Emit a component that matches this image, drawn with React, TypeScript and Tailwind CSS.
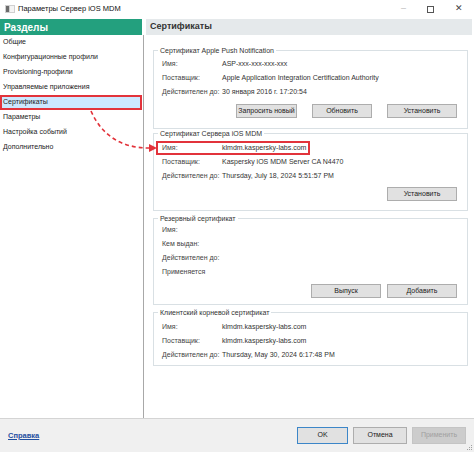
import type { ReactNode } from 'react';

const sections = [
  'Общие',
  'Конфигурационные профили',
  'Provisioning-профили',
  'Управляемые приложения',
  'Сертификаты',
  'Параметры',
  'Настройка событий',
  'Дополнительно'
];

function Btn({ children, className = '' }: { children: ReactNode; className?: string }) {
  return (
    <div
      className={`flex h-[14px] items-center justify-center border border-[#adadad] bg-[#e1e1e1] text-[7px] text-[#222] ${className}`}
    >
      {children}
    </div>
  );
}

function Row({ label, value, boxed = false }: { label: string; value?: string; boxed?: boolean }) {
  return (
    <div
      className={
        boxed
          ? 'ml-[2px] grid h-[14px] w-[154px] grid-cols-[60px_1fr] items-center border-2 border-[#e2333b] pl-[4px]'
          : 'grid h-[14px] grid-cols-[60px_1fr] items-center pl-[8px]'
      }
    >
      <span className="text-[#444]">{label}</span>
      <span className="text-[#333]">{value}</span>
    </div>
  );
}

function Group({ title, children, className = '' }: { title: string; children: ReactNode; className?: string }) {
  return (
    <fieldset className={`border border-[#d9e0e4] px-0 ${className}`}>
      <legend className="ml-[4px] px-[2px] text-[7px] leading-[9px] text-[#333]">{title}</legend>
      {children}
    </fieldset>
  );
}

export default function App() {
  return (
    <div className="relative flex h-[452px] w-[474px] flex-col overflow-hidden bg-white font-['Liberation_Sans',Arial,sans-serif] text-[7px] text-[#333]">
      {/* title bar */}
      <div className="flex h-[18px] items-center">
        <svg width="10" height="8" viewBox="0 0 10 8" className="ml-[5px]">
          <rect x="0" y="0" width="10" height="8" fill="#d0d0d0" />
          <rect x="1" y="1" width="3" height="6" fill="#6b6b6b" />
          <rect x="5" y="1" width="4" height="6" fill="#f4f4f4" />
        </svg>
        <span className="ml-[3px] text-[7.5px] text-[#111]">Параметры Сервер iOS MDM</span>
        <div className="ml-auto flex items-center text-[#444]">
          <span className="w-[27px] text-center text-[9px] text-[#bbb]">–</span>
          <span className="flex w-[27px] justify-center">
            <span className="block h-[7px] w-[7px] border border-[#555]" />
          </span>
          <span className="w-[30px] text-center text-[9px]">✕</span>
        </div>
      </div>

      {/* main */}
      <div className="mt-[1px] flex flex-1">
        <div className="flex w-[146px] flex-col">
          <div className="mr-[4px] flex h-[16px] items-center bg-[#23a07e] pl-[4px] text-[10px] font-bold text-white">
            Разделы
          </div>
          <div className="flex w-[144px] flex-1 flex-col border-r border-[#a8a8a8]">
            {sections.map((s) =>
              s === 'Сертификаты' ? (
                <div
                  key={s}
                  className="flex h-[15px] w-[142px] items-center border-2 border-[#e2333b] bg-[#cce8ff] pl-[1px] text-[7px] text-[#222]"
                >
                  {s}
                </div>
              ) : (
                <div key={s} className="flex h-[15px] items-center pl-[3px] text-[7px] text-[#222]">
                  {s}
                </div>
              )
            )}
          </div>
        </div>

        <div className="flex flex-1 flex-col pr-[2px]">
          <div className="flex h-[16px] items-center bg-[#e5e9eb] pl-[4px] text-[9px] font-bold text-[#333]">
            Сертификаты
          </div>
          <div className="flex flex-col pl-[7px] pr-[4px] pt-[11px]">
            <Group title="Сертификат Apple Push Notification" className="pb-[10px]">
              <div className="pt-[2px]">
                <Row label="Имя:" value="ASP-xxx-xxx-xxx-xxx" />
                <Row label="Поставщик:" value="Apple Application Integration Certification Authority" />
                <Row label="Действителен до:" value="30 января 2016 г. 17:20:54" />
              </div>
              <div className="mt-[5px] flex justify-end gap-[15px] pr-[10px]">
                <Btn className="w-[61px]">Запросить новый</Btn>
                <Btn className="w-[60px]">Обновить</Btn>
                <Btn className="w-[70px]">Установить</Btn>
              </div>
            </Group>

            <Group title="Сертификат Сервера iOS MDM" className="pb-[9px]">
              <div className="pt-[3px]">
                <Row label="Имя:" value="klmdm.kaspersky-labs.com" boxed />
                <Row label="Поставщик:" value="Kaspersky iOS MDM Server CA N4470" />
                <Row label="Действителен до:" value="Thursday, July 18, 2024 5:51:57 PM" />
              </div>
              <div className="mt-[4px] flex justify-end pr-[10px]">
                <Btn className="w-[70px]">Установить</Btn>
              </div>
            </Group>

            <Group title="Резервный сертификат" className="mt-[3px] pb-[6px]">
              <div>
                <Row label="Имя:" />
                <Row label="Кем выдан:" />
                <Row label="Действителен до:" />
                <Row label="Применяется" />
              </div>
              <div className="mt-[5px] flex justify-end gap-[6px] pr-[10px]">
                <Btn className="w-[70px]">Выпуск</Btn>
                <Btn className="w-[70px]">Добавить</Btn>
              </div>
            </Group>

            <Group title="Клиентский корневой сертификат" className="mt-[3px] pb-[3px]">
              <div className="pt-[3px]">
                <Row label="Имя:" value="klmdm.kaspersky-labs.com" />
                <Row label="Поставщик:" value="klmdm.kaspersky-labs.com" />
                <Row label="Действителен до:" value="Thursday, May 30, 2024 6:17:48 PM" />
              </div>
            </Group>
          </div>
        </div>
      </div>

      {/* footer */}
      <div className="flex h-[34px] items-center border-t border-[#d4d4d4] bg-[#f0f0f0] pl-[8px] pr-[8px]">
        <span className="text-[7.5px] font-bold text-[#1f4fa0] underline">Справка</span>
        <div className="ml-auto flex gap-[5px]">
          <div className="flex h-[17px] w-[51px] items-center justify-center border border-[#3c86c8] bg-[#e1e1e1] text-[7px] text-[#222]">
            OK
          </div>
          <div className="flex h-[17px] w-[54px] items-center justify-center border border-[#adadad] bg-[#e1e1e1] text-[7px] text-[#222]">
            Отмена
          </div>
          <div className="flex h-[17px] w-[54px] items-center justify-center border border-[#c4c4c4] bg-[#cccccc] text-[7px] text-[#a0a0a0]">
            Применить
          </div>
        </div>
      </div>

      {/* annotation arrow */}
      <svg className="pointer-events-none absolute left-0 top-0" width="474" height="452">
        <path
          d="M91 111 C 102 136, 122 148, 149 148"
          fill="none"
          stroke="#e2333b"
          strokeWidth="1.6"
          strokeDasharray="4 3"
        />
        <polygon points="149,144 157,148 149,152" fill="#e2333b" />
      </svg>

      {/* resize grip */}
      <svg className="absolute bottom-[1px] right-[1px]" width="7" height="7" viewBox="0 0 7 7">
        <rect x="5" y="1" width="1" height="1" fill="#a0a0a0" />
        <rect x="3" y="3" width="1" height="1" fill="#a0a0a0" />
        <rect x="5" y="3" width="1" height="1" fill="#a0a0a0" />
        <rect x="1" y="5" width="1" height="1" fill="#a0a0a0" />
        <rect x="3" y="5" width="1" height="1" fill="#a0a0a0" />
        <rect x="5" y="5" width="1" height="1" fill="#a0a0a0" />
      </svg>
    </div>
  );
}
